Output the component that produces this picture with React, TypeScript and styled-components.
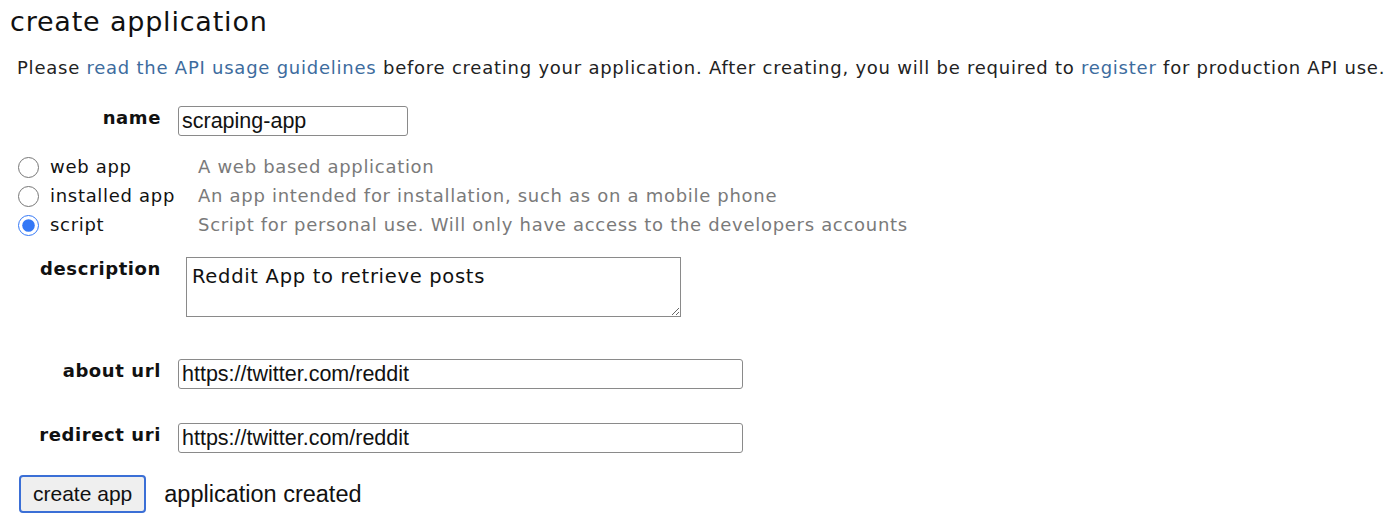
import { Fragment } from "react";
import styled, { createGlobalStyle } from "styled-components";

const Global = createGlobalStyle`
  body {
    margin: 0;
    background: #fff;
    font-family: "DejaVu Sans", Verdana, sans-serif;
    color: #222;
  }
`;

const Page = styled.div`
  padding: 4px 10px 0 10px;
`;

const Title = styled.h1`
  margin: 0;
  font-size: 27px;
  font-weight: normal;
  letter-spacing: 0.8px;
  color: #111;
  line-height: 36px;
`;

const Intro = styled.p`
  margin: 16px 0 0 7px;
  font-size: 18px;
  letter-spacing: 0.76px;
  line-height: 24px;
  color: #222;
  white-space: nowrap;
  a {
    color: #3d6c9e;
    text-decoration: none;
  }
`;

const Row = styled.div<{ $top: number }>`
  display: flex;
  align-items: flex-start;
  margin-top: ${(p) => p.$top}px;
`;

const Label = styled.label`
  width: 151px;
  text-align: right;
  font-weight: bold;
  font-size: 18px;
  letter-spacing: 0.6px;
  line-height: 24px;
  color: #111;
  padding-right: 17px;
  flex-shrink: 0;
`;

const TextInput = styled.input<{ $w: number }>`
  width: ${(p) => p.$w}px;
  height: 30px;
  box-sizing: border-box;
  border: 1px solid #8a8a8a;
  border-radius: 3px;
  padding: 0 3px;
  font-family: "Liberation Sans", Arial, sans-serif;
  font-size: 21.5px;
  color: #111;
  margin: 0;
`;

const TextArea = styled.textarea`
  width: 495px;
  height: 60px;
  box-sizing: border-box;
  border: 1px solid #8a8a8a;
  margin: 0 0 0 8px;
  padding: 7px 5px 5px;
  font-family: "DejaVu Sans", Verdana, sans-serif;
  font-size: 19.5px;
  letter-spacing: 0.7px;
  color: #111;
  resize: both;
`;

const Choices = styled.div`
  margin: 19px 0 0 8px;
  display: grid;
  grid-template-columns: 180px auto;
  row-gap: 5px;
`;

const Choice = styled.label`
  display: flex;
  align-items: center;
  font-size: 18px;
  letter-spacing: 0.7px;
  color: #111;
  line-height: 24px;
  input {
    width: 21px;
    height: 21px;
    margin: 0 11px 0 0;
    accent-color: #3478f6;
  }
`;

const Hint = styled.span`
  font-size: 18px;
  letter-spacing: 0.7px;
  color: #7a7a7a;
  line-height: 24px;
  display: flex;
  align-items: center;
`;

const Actions = styled.div`
  display: flex;
  align-items: center;
  margin-top: 22px;
  margin-left: 9px;
  gap: 18px;
`;

const Button = styled.button`
  height: 38px;
  padding: 0 12px;
  background: #efefef;
  border: 2px solid #3b6fd6;
  border-radius: 4px;
  font-family: "Liberation Sans", Arial, sans-serif;
  font-size: 21px;
  color: #111;
`;

const Status = styled.span`
  font-family: "Liberation Sans", Arial, sans-serif;
  font-size: 23.5px;
  color: #111;
`;

const choices = [
  { id: "web", label: "web app", hint: "A web based application" },
  { id: "installed", label: "installed app", hint: "An app intended for installation, such as on a mobile phone" },
  { id: "script", label: "script", hint: "Script for personal use. Will only have access to the developers accounts" },
];

export default function App() {
  return (
    <Page>
      <Global />
      <Title>create application</Title>
      <Intro>
        Please <a href="#">read the API usage guidelines</a> before creating your application. After creating, you will be
        required to <a href="#">register</a> for production API use.
      </Intro>
      <Row $top={26}>
        <Label>name</Label>
        <TextInput $w={230} defaultValue="scraping-app" />
      </Row>
      <Choices>
        {choices.map((c) => (
          <Fragment key={c.id}>
            <Choice>
              <input type="radio" name="type" defaultChecked={c.id === "script"} />
              {c.label}
            </Choice>
            <Hint>{c.hint}</Hint>
          </Fragment>
        ))}
      </Choices>
      <Row $top={20}>
        <Label>description</Label>
        <TextArea defaultValue="Reddit App to retrieve posts" />
      </Row>
      <Row $top={42}>
        <Label>about url</Label>
        <TextInput $w={565} defaultValue="https://twitter.com/reddit" />
      </Row>
      <Row $top={34}>
        <Label>redirect uri</Label>
        <TextInput $w={565} defaultValue="https://twitter.com/reddit" />
      </Row>
      <Actions>
        <Button>create app</Button>
        <Status>application created</Status>
      </Actions>
    </Page>
  );
}
